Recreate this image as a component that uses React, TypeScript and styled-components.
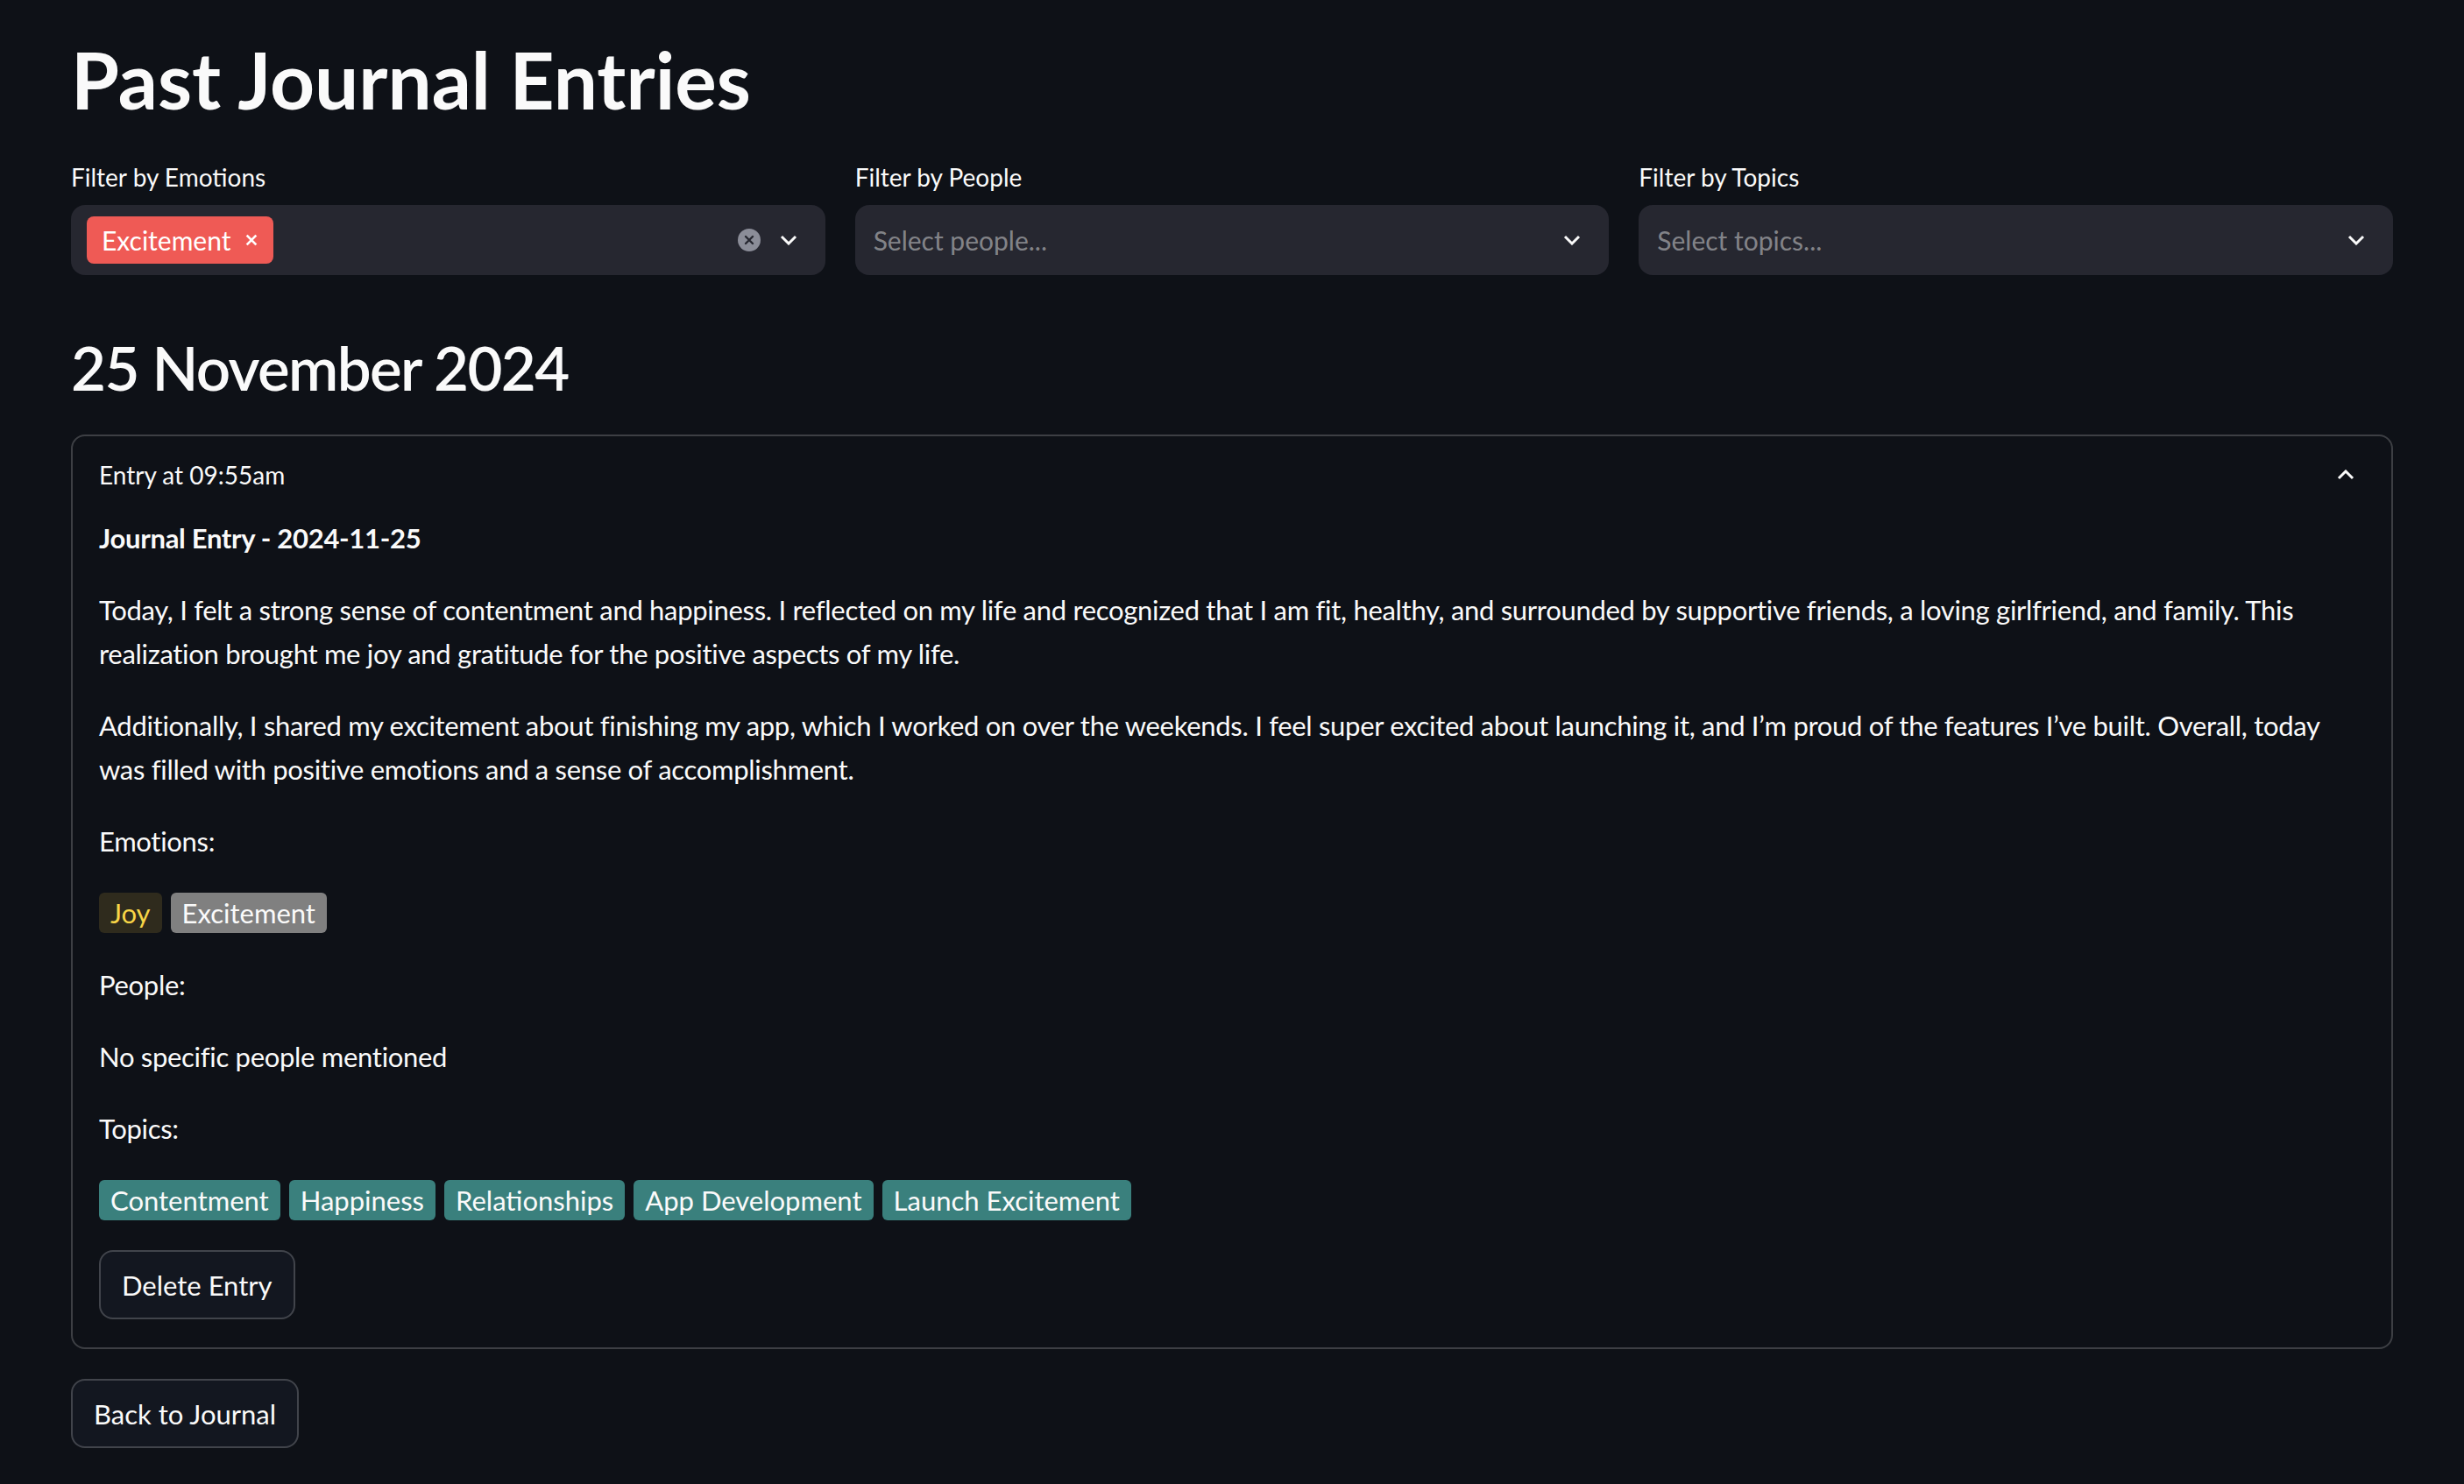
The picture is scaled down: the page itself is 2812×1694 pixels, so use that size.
import React from "react";
import styled, { createGlobalStyle } from "styled-components";

const GlobalStyle = createGlobalStyle`
  body {
    margin: 0;
    background: #0e1117;
    color: #fafafa;
    font-family: Lato, "Noto Sans", sans-serif;
  }
`;

const emotionTags = [
  { label: "Joy", tone: "joy" },
  { label: "Excitement", tone: "gray" },
] as const;

const topicTags = ["Contentment", "Happiness", "Relationships", "App Development", "Launch Excitement"];

export default function App() {
  return (
    <>
      <GlobalStyle />
      <Page>
        <Title>Past Journal Entries</Title>
        <FilterRow>
          <Field>
            <Label>Filter by Emotions</Label>
            <Select>
              <Chip>
                Excitement
                <ChipClose viewBox="0 0 12 12">
                  <path d="M2 2 L10 10 M10 2 L2 10" />
                </ChipClose>
              </Chip>
              <Spacer />
              <ClearIcon viewBox="0 0 26 26">
                <circle cx="13" cy="13" r="13" fill="#8b8d98" />
                <path d="M9 9 L17 17 M17 9 L9 17" stroke="#262730" strokeWidth="2.4" strokeLinecap="round" />
              </ClearIcon>
              <Chevron />
            </Select>
          </Field>
          <Field>
            <Label>Filter by People</Label>
            <Select>
              <Placeholder>Select people...</Placeholder>
              <Chevron />
            </Select>
          </Field>
          <Field>
            <Label>Filter by Topics</Label>
            <Select>
              <Placeholder>Select topics...</Placeholder>
              <Chevron />
            </Select>
          </Field>
        </FilterRow>

        <DateHeading>25 November 2024</DateHeading>

        <Expander>
          <ExpanderHeader>
            <span>Entry at 09:55am</span>
            <Chevron up />
          </ExpanderHeader>
          <ExpanderBody>
            <Strong>Journal Entry - 2024-11-25</Strong>
            <Para>
              Today, I felt a strong sense of contentment and happiness. I reflected on my life and recognized that I am
              fit, healthy, and surrounded by supportive friends, a loving girlfriend, and family. This realization
              brought me joy and gratitude for the positive aspects of my life.
            </Para>
            <Para>
              Additionally, I shared my excitement about finishing my app, which I worked on over the weekends. I feel
              super excited about launching it, and I’m proud of the features I’ve built. Overall, today was filled with
              positive emotions and a sense of accomplishment.
            </Para>
            <Para>Emotions:</Para>
            <TagRow>
              {emotionTags.map((t) => (
                <Tag key={t.label} tone={t.tone}>
                  {t.label}
                </Tag>
              ))}
            </TagRow>
            <Para>People:</Para>
            <Para>No specific people mentioned</Para>
            <Para>Topics:</Para>
            <TagRow>
              {topicTags.map((t) => (
                <Tag key={t} tone="teal">
                  {t}
                </Tag>
              ))}
            </TagRow>
            <div>
              <Button>Delete Entry</Button>
            </div>
          </ExpanderBody>
        </Expander>

        <BackRow>
          <Button>Back to Journal</Button>
        </BackRow>
      </Page>
    </>
  );
}

const Chevron = ({ up }: { up?: boolean }) => (
  <ChevronSvg viewBox="0 0 20 12" up={up}>
    <path d="M2 2 L10 10 L18 2" />
  </ChevronSvg>
);

const Page = styled.div`
  padding: 38px 81px 40px;
  min-height: 100vh;
  box-sizing: border-box;
`;

const Title = styled.h1`
  margin: 0;
  font-size: 89px;
  line-height: 106px;
  font-weight: 700;
`;

const FilterRow = styled.div`
  display: grid;
  grid-template-columns: repeat(3, 1fr);
  gap: 34px;
  margin-top: 37px;
`;

const Field = styled.div`
  display: flex;
  flex-direction: column;
  gap: 11px;
`;

const Label = styled.div`
  font-size: 28px;
  line-height: 42px;
`;

const Select = styled.div`
  display: flex;
  align-items: center;
  height: 80px;
  background: #262730;
  border-radius: 16px;
  padding: 0 32px 0 18px;
  box-sizing: border-box;
`;

const Chip = styled.span`
  display: inline-flex;
  align-items: center;
  gap: 16px;
  height: 54px;
  padding: 0 17px;
  background: #ef5a55;
  border-radius: 8px;
  font-size: 30px;
  color: #fff;
`;

const ChipClose = styled.svg`
  width: 16px;
  height: 16px;
  stroke: #fff;
  stroke-width: 2;
  fill: none;
`;

const Spacer = styled.div`
  flex: 1;
`;

const ClearIcon = styled.svg`
  width: 26px;
  height: 26px;
  margin-right: 22px;
`;

const Placeholder = styled.span`
  flex: 1;
  padding-left: 3px;
  font-size: 30px;
  color: rgba(250, 250, 250, 0.45);
`;

const ChevronSvg = styled.svg<{ up?: boolean }>`
  width: 20px;
  height: 12px;
  fill: none;
  stroke: #fafafa;
  stroke-width: 3;
  transform: ${(p) => (p.up ? "rotate(180deg)" : "none")};
`;

const DateHeading = styled.h2`
  margin: 63px 0 33px;
  font-size: 69px;
  line-height: 86px;
  font-weight: 600;
  letter-spacing: -1.6px;
`;

const Expander = styled.div`
  border: 2px solid rgba(250, 250, 250, 0.2);
  border-radius: 16px;
`;

const ExpanderHeader = styled.div`
  display: flex;
  align-items: center;
  justify-content: space-between;
  padding: 23px 42px 0 30px;
  font-size: 28px;
  line-height: 42px;
`;

const ExpanderBody = styled.div`
  display: flex;
  flex-direction: column;
  gap: 32px;
  padding: 26px 30px 32px;
  font-size: 31px;
  line-height: 50px;
  letter-spacing: -0.3px;
`;

const Strong = styled.div`
  font-weight: 700;
`;

const Para = styled.p`
  margin: 0;
`;

const TagRow = styled.div`
  display: flex;
  align-items: center;
  gap: 10px;
  height: 50px;
`;

const tagColors = {
  joy: { bg: "#2f2b1d", fg: "#f7d547" },
  gray: { bg: "#808080", fg: "#fafafa" },
  teal: { bg: "#3a807d", fg: "#fafafa" },
};

const Tag = styled.span<{ tone: keyof typeof tagColors }>`
  display: inline-block;
  padding: 0 13px;
  line-height: 46px;
  border-radius: 6px;
  letter-spacing: 0;
  background: ${(p) => tagColors[p.tone].bg};
  color: ${(p) => tagColors[p.tone].fg};
`;

const Button = styled.button`
  height: 79px;
  padding: 0 24px;
  background: #131720;
  color: #fafafa;
  border: 2px solid rgba(250, 250, 250, 0.2);
  border-radius: 16px;
  font-family: inherit;
  font-size: 31px;
`;

const BackRow = styled.div`
  margin-top: 34px;
`;
